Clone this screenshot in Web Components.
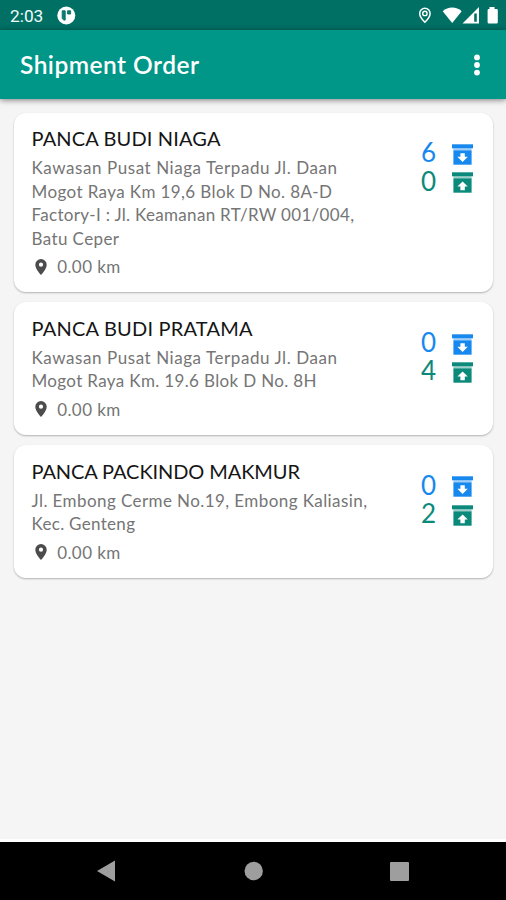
<!DOCTYPE html>
<html lang="id">
<head>
<meta charset="utf-8">
<title>Shipment Order</title>
<style>
	body {
		margin: 0;
		height: 900px;
		overflow: hidden;
		background: #f5f5f5;
		font-family: Lato, "Noto Sans", sans-serif;
	}
</style>
</head>
<body>
<phone-screen>
	<status-bar slot="top" time="2:03"></status-bar>
	<app-bar slot="top"><fit-text width="179">Shipment Order</fit-text></app-bar>
	<order-card down="6" up="0" distance="0.00 km">
		<fit-text slot="name" width="189">PANCA BUDI NIAGA</fit-text>
		<fit-text width="305.5">Kawasan Pusat Niaga Terpadu Jl. Daan</fit-text>
		<fit-text width="300.5">Mogot Raya Km 19,6 Blok D No. 8A-D</fit-text>
		<fit-text width="322.5">Factory-I : Jl. Keamanan RT/RW 001/004,</fit-text>
		<fit-text width="87.5">Batu Ceper</fit-text>
	</order-card>
	<order-card down="0" up="4" distance="0.00 km">
		<fit-text slot="name" width="221">PANCA BUDI PRATAMA</fit-text>
		<fit-text width="305.5">Kawasan Pusat Niaga Terpadu Jl. Daan</fit-text>
		<fit-text width="285">Mogot Raya Km. 19.6 Blok D No. 8H</fit-text>
	</order-card>
	<order-card down="0" up="2" distance="0.00 km">
		<fit-text slot="name" width="268.5">PANCA PACKINDO MAKMUR</fit-text>
		<fit-text width="335.5">Jl. Embong Cerme No.19, Embong Kaliasin,</fit-text>
		<fit-text width="103.5">Kec. Genteng</fit-text>
	</order-card>
	<nav-bar slot="bottom"></nav-bar>
</phone-screen>

<script>
// one line of text, tracked so that it fills the given width
class FitText extends HTMLElement {
	constructor() {
		super();
		this.attachShadow({mode: "open"}).innerHTML = `
			<style>
				:host { display: block; white-space: nowrap; }
				span { display: inline-block; }
			</style>
			<span><slot></slot></span>
		`;
	}

	connectedCallback() {
		this.fit();
	}

	fit() {
		let span = this.shadowRoot.querySelector("span");
		let count = this.textContent.length;
		let width = Number(this.getAttribute("width"));
		span.style.letterSpacing = "0px";
		let natural = span.getBoundingClientRect().width;
		span.style.letterSpacing = `${(width - natural) / (count - 1)}px`;
	}
}

class PhoneScreen extends HTMLElement {
	constructor() {
		super();
		this.attachShadow({mode: "open"}).innerHTML = `
			<style>
				:host {
					display: flex;
					flex-direction: column;
					height: 900px;
				}
				main {
					flex: 1;
					display: flex;
					flex-direction: column;
					gap: 10.2px;
					padding: 13.8px 13px 0 14px;
				}
			</style>
			<slot name="top"></slot>
			<main><slot></slot></main>
			<slot name="bottom"></slot>
		`;
	}
}

class StatusBar extends HTMLElement {
	connectedCallback() {
		this.attachShadow({mode: "open"}).innerHTML = `
			<style>
				:host {
					display: flex;
					align-items: center;
					box-sizing: border-box;
					height: 30px;
					padding: 0 8px 0 10px;
					background: #007065;
					color: #f2fbfa;
					font: 400 17.3px/30px Roboto, sans-serif;
				}
				time { width: 47px; padding-top: 2px; }
				svg { display: block; }
				.signals { margin-left: auto; }
			</style>
			<time>${this.getAttribute("time")}</time>
			<svg width="19" height="30" viewBox="57 0 19 30">
				<circle cx="66.3" cy="15.5" r="9" fill="#fff"/>
				<path d="M62.2 10.8h3v9.3h-1.4l-1.6-1.5zM67.6 10.8h3v3.2h-3z" fill="#0d7d73" stroke="#007065" stroke-width=".9"/>
			</svg>
			<svg class="signals" width="84" height="30" viewBox="414 0 84 30" fill="#fff">
				<path d="M424.9 8.300a5.200 5.200 0 0 0-5.200 5.200c0 3.700 5.200 8.800 5.200 8.800s5.200-5.100 5.200-8.800a5.200 5.200 0 0 0-5.200-5.200z" fill="none" stroke="#fff" stroke-width="1.5"/>
				<circle cx="424.9" cy="13.4" r="2.2" fill="none" stroke="#fff" stroke-width="1.4"/>
				<path d="M442.7 11.2c5.200-5 13.800-5 19 0L452.2 23z"/>
				<path fill-rule="evenodd" d="M479 7v16.500h-16.500zM474.2 13.600v8.200h2.600v-8.200z"/>
				<path d="M489.500 7h5v2h2q1.300 0 1.300 1.300v12q0 1.300-1.300 1.300h-7.600q-1.300 0-1.300-1.300v-12q0-1.300 1.300-1.300h.6z"/>
			</svg>
		`;
	}
}

class AppBar extends HTMLElement {
	constructor() {
		super();
		this.attachShadow({mode: "open"}).innerHTML = `
			<style>
				:host {
					display: flex;
					align-items: center;
					justify-content: space-between;
					box-sizing: border-box;
					height: 69px;
					padding: 0 24px 0 20px;
					background: #009788;
					box-shadow: 0 1px 6px rgba(0, 0, 0, .5);
					color: #fff;
					font-size: 24.5px;
					font-weight: 600;
				}
				svg { display: block; }
			</style>
			<slot></slot>
			<svg width="10" height="24" viewBox="0 0 10 24" fill="#fff">
				<circle cx="5" cy="4.4" r="2.9"/>
				<circle cx="5" cy="12" r="2.9"/>
				<circle cx="5" cy="19.6" r="2.9"/>
			</svg>
		`;
	}
}

// number beside a box with an arrow, direction is "down" or "up"
class BoxCount extends HTMLElement {
	connectedCallback() {
		let arrow = this.getAttribute("direction") === "down"
			? "M8.4 9.200h4.400v3.600h3L10.600 18 5.400 12.800h3z"
			: "M8.4 18.200h4.400v-3.600h3L10.600 9.400 5.400 14.600h3z";
		this.attachShadow({mode: "open"}).innerHTML = `
			<style>
				:host {
					display: flex;
					align-items: center;
					height: 28.4px;
					font-size: 26px;
					line-height: 28.4px;
				}
				span { width: 31px; padding: 2px 0 0 .5px; }
				svg { display: block; padding-top: 6px; }
			</style>
			<span><slot></slot></span>
			<svg width="21" height="21" viewBox="0 0 21 21" fill="currentColor">
				<path d="M0 .3h21v4H0z"/>
				<path d="M1.400 4.300h18.200v2H1.400z" opacity=".4"/>
				<path d="M1.400 6.300h18.200v14.400H1.400z"/>
				<path d="${arrow}" fill="#fff"/>
			</svg>
		`;
	}
}

class OrderCard extends HTMLElement {
	connectedCallback() {
		this.attachShadow({mode: "open"}).innerHTML = `
			<style>
				:host {
					display: flex;
					justify-content: space-between;
					padding: 12.4px 20px 14.1px 17.5px;
					border-radius: 12px;
					background: #fff;
					box-shadow: 0 1px 2px rgba(0, 0, 0, .28);
				}
				.name {
					margin-bottom: 4.2px;
					color: #151515;
					font-size: 20px;
					line-height: 27px;
				}
				.address, .distance {
					color: #757575;
					font-size: 17px;
					line-height: 23.4px;
				}
				.distance {
					display: flex;
					align-items: center;
					gap: 10.2px;
					margin-top: 4.8px;
					padding-left: 3.5px;
				}
				.pin { display: block; }
				.counts { padding-top: 12px; }
				.down { color: #1788ee; }
				.up { color: #0b8a7b; }
			</style>
			<div>
				<div class="name"><slot name="name"></slot></div>
				<div class="address"><slot></slot></div>
				<div class="distance">
					<svg class="pin" width="12" height="16" viewBox="0 0 12 16">
						<path fill="#4c4c4c" fill-rule="evenodd" d="M6 0a5.700 5.700 0 0 0-5.700 5.700C.3 10 6 16 6 16s5.700-6 5.700-10.300A5.700 5.700 0 0 0 6 0zm0 3.600a2.100 2.100 0 1 1 0 4.200 2.100 2.100 0 0 1 0-4.200z"/>
					</svg>
					<fit-text width="63">${this.getAttribute("distance")}</fit-text>
				</div>
			</div>
			<div class="counts">
				<box-count class="down" direction="down">${this.getAttribute("down")}</box-count>
				<box-count class="up" direction="up">${this.getAttribute("up")}</box-count>
			</div>
		`;
		// the lines were measured before this card gave them a font size
		this.querySelectorAll("fit-text").forEach(line => line.fit());
	}
}

class NavBar extends HTMLElement {
	constructor() {
		super();
		this.attachShadow({mode: "open"}).innerHTML = `
			<style>
				:host {
					display: block;
					height: 58px;
					border-top: 3px solid #fff;
					background: #000;
				}
				svg { display: block; }
			</style>
			<svg width="506" height="58" viewBox="0 842 506 58" fill="#9e9e9e">
				<path d="M97 871l18-10.500v21z"/>
				<circle cx="253.700" cy="871" r="9.200"/>
				<rect x="390" y="862" width="19" height="19" rx="1"/>
			</svg>
		`;
	}
}

customElements.define("phone-screen", PhoneScreen);
customElements.define("status-bar", StatusBar);
customElements.define("app-bar", AppBar);
customElements.define("box-count", BoxCount);
customElements.define("fit-text", FitText);
customElements.define("order-card", OrderCard);
customElements.define("nav-bar", NavBar);
</script>
</body>
</html>
